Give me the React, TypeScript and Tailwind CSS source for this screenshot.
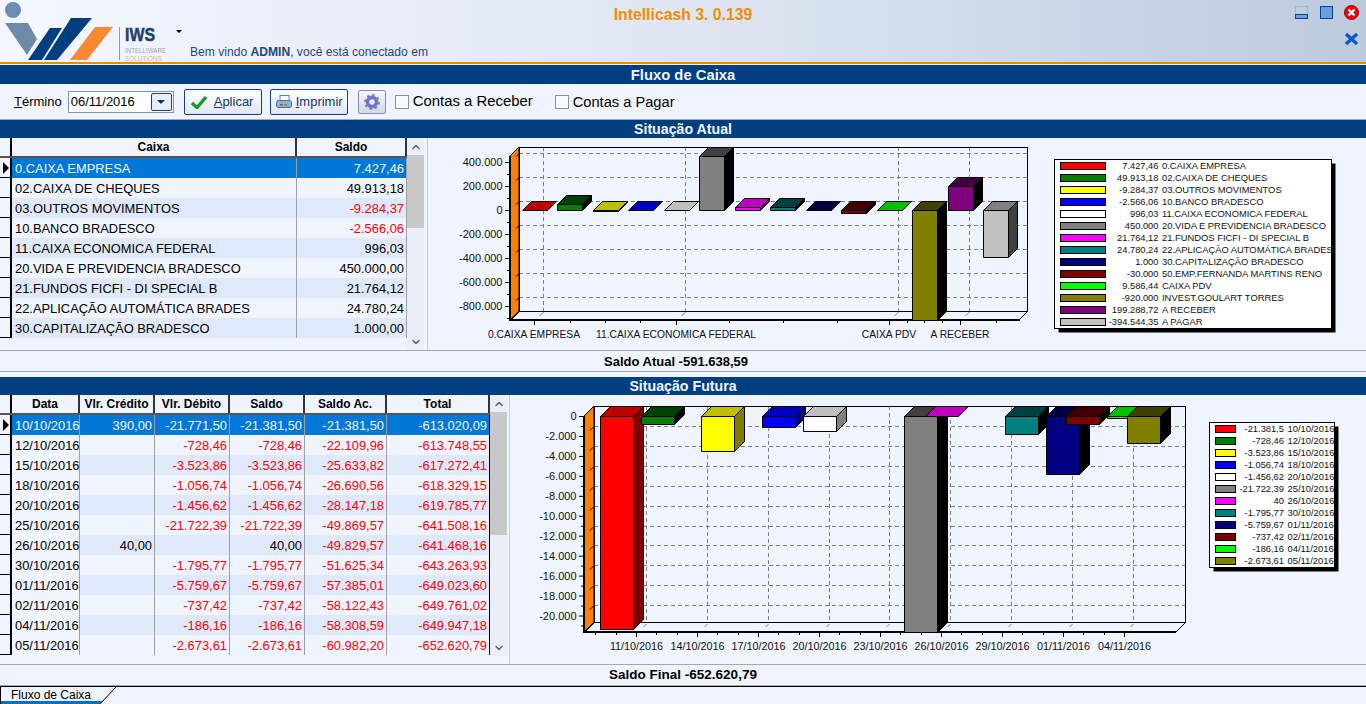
import { ChevronDown, ChevronUp } from "lucide-react";

const shade = (hex: string, amount: number) => {
  const n = parseInt(hex.slice(1), 16);
  const part = (v: number) => Math.max(0, v - amount).toString(16).padStart(2, "0");
  return `#${part((n >> 16) & 255)}${part((n >> 8) & 255)}${part(n & 255)}`;
};

interface BarProps {
  x: number;
  w: number;
  y0: number;
  y1: number;
  d: number;
  c: string;
}

function Bar({ x, w, y0, y1, d, c }: BarProps) {
  return (
    <g stroke="#000" strokeWidth="1" strokeLinejoin="round">
      <polygon
        points={`${x},${y0} ${x + d},${y0 - d} ${x + w + d},${y0 - d} ${x + w},${y0}`}
        fill={shade(c, 64)}
      />
      <polygon
        points={`${x + w},${y0} ${x + w + d},${y0 - d} ${x + w + d},${y1 - d} ${x + w},${y1}`}
        fill={shade(c, 128)}
      />
      <rect x={x} y={y0} width={w} height={y1 - y0} fill={c} />
    </g>
  );
}

interface LegendProps {
  x: number;
  y: number;
  w: number;
  h: number;
  swatchX: number;
  swatchW: number;
  valueEnd: number;
  first: number;
  rows: [string, string, string][];
}

function Legend({ x, y, w, h, swatchX, swatchW, valueEnd, first, rows }: LegendProps) {
  return (
    <g>
      <rect x={x + 4} y={y + 4} width={w} height={h} fill="#000" />
      <rect x={x} y={y} width={w} height={h} fill="#fff" stroke="#000" />
      {rows.map(([color, value, name], i) => (
        <g key={name}>
          <rect x={swatchX} y={first + i * 12} width={swatchW} height={7} fill={color} stroke="#000" />
          <text x={valueEnd} y={first + i * 12 + 6.5} fontSize="9.33" textAnchor="end" fill="#111">
            {value}
          </text>
          <text x={valueEnd + 3.5} y={first + i * 12 + 6.5} fontSize="9.4" fill="#111">
            {name}
          </text>
        </g>
      ))}
    </g>
  );
}

const TOP_YS = [153.5, 177.5, 201.5, 225.5, 249.5, 273.5, 297.5];
const TOP_LABELS = ["400.000", "200.000", "0", "-200.000", "-400.000", "-600.000", "-800.000"];
const TOP_V = [543.5, 685.5, 898.5, 969.5];
const TOP_TICKS = [570, 605, 640, 729, 783, 837, 907, 924, 942, 996];
const TOP_MAJOR = [534, 676, 889, 960];

const TOP_BARS = [
  { x: 522.5, y0: 210.5, y1: 210.5, c: "#ff0000" },
  { x: 557.5, y0: 204.5, y1: 210.5, c: "#008000" },
  { x: 593.5, y0: 210.5, y1: 211.5, c: "#ffff00" },
  { x: 628.5, y0: 210.5, y1: 210.5, c: "#0000ff" },
  { x: 664.5, y0: 210.5, y1: 210.5, c: "#ffffff" },
  { x: 699.5, y0: 156.5, y1: 210.5, c: "#808080" },
  { x: 735.5, y0: 207.5, y1: 210.5, c: "#ff00ff" },
  { x: 770.5, y0: 207.5, y1: 210.5, c: "#008080" },
  { x: 806.5, y0: 210.5, y1: 210.5, c: "#000080" },
  { x: 841.5, y0: 210.5, y1: 213.5, c: "#800000" },
  { x: 877.5, y0: 210.5, y1: 210.5, c: "#00ff00" },
  { x: 912.5, y0: 210.5, y1: 320.5, c: "#808000" },
  { x: 948.5, y0: 186.5, y1: 210.5, c: "#800080" },
  { x: 983.5, y0: 210.5, y1: 257.5, c: "#c0c0c0" },
];

const TOP_LEGEND: [string, string, string][] = [
  ["#ff0000", "7.427,46", "0.CAIXA EMPRESA"],
  ["#008000", "49.913,18", "02.CAIXA DE CHEQUES"],
  ["#ffff00", "-9.284,37", "03.OUTROS MOVIMENTOS"],
  ["#0000ff", "-2.566,06", "10.BANCO BRADESCO"],
  ["#ffffff", "996,03", "11.CAIXA ECONOMICA FEDERAL"],
  ["#808080", "450.000", "20.VIDA E PREVIDENCIA BRADESCO"],
  ["#ff00ff", "21.764,12", "21.FUNDOS FICFI - DI SPECIAL B"],
  ["#008080", "24.780,24", "22.APLICAÇÃO AUTOMÁTICA BRADES"],
  ["#000080", "1.000", "30.CAPITALIZAÇÃO BRADESCO"],
  ["#800000", "-30.000", "50.EMP.FERNANDA MARTINS RENO"],
  ["#00ff00", "9.586,44", "CAIXA PDV"],
  ["#808000", "-920.000", "INVEST.GOULART TORRES"],
  ["#800080", "199.288,72", "A RECEBER"],
  ["#c0c0c0", "-394.544,35", "A PAGAR"],
];

const BOTTOM_YS = [426.5, 446.5, 466.5, 486.5, 506.5, 526.5, 545.5, 565.5, 585.5, 605.5];
const BOTTOM_LABELS = ["0", "-2.000", "-4.000", "-6.000", "-8.000", "-10.000", "-12.000", "-14.000", "-16.000", "-18.000", "-20.000"];
const BOTTOM_V = [646.5, 707.5, 768.5, 829.5, 889.5, 950.5, 1011.5, 1072.5, 1133.5];
const BOTTOM_DATES = ["11/10/2016", "14/10/2016", "17/10/2016", "20/10/2016", "23/10/2016", "26/10/2016", "29/10/2016", "01/11/2016", "04/11/2016"];

const BOTTOM_BARS = [
  { x: 600.5, y1: 629.5, c: "#ff0000" },
  { x: 641.5, y1: 424.5, c: "#008000" },
  { x: 701.5, y1: 451.5, c: "#ffff00" },
  { x: 762.5, y1: 427.5, c: "#0000ff" },
  { x: 803.5, y1: 431.5, c: "#ffffff" },
  { x: 904.5, y1: 632.5, c: "#808080" },
  { x: 925.5, y1: 416.5, c: "#ff00ff" },
  { x: 1005.5, y1: 434.5, c: "#008080" },
  { x: 1046.5, y1: 474.5, c: "#000080" },
  { x: 1066.5, y1: 424.5, c: "#800000" },
  { x: 1107.5, y1: 418.5, c: "#00ff00" },
  { x: 1127.5, y1: 443.5, c: "#808000" },
];

const BOTTOM_LEGEND: [string, string, string][] = [
  ["#ff0000", "-21.381,5", "10/10/2016"],
  ["#008000", "-728,46", "12/10/2016"],
  ["#ffff00", "-3.523,86", "15/10/2016"],
  ["#0000ff", "-1.056,74", "18/10/2016"],
  ["#ffffff", "-1.456,62", "20/10/2016"],
  ["#808080", "-21.722,39", "25/10/2016"],
  ["#ff00ff", "40", "26/10/2016"],
  ["#008080", "-1.795,77", "30/10/2016"],
  ["#000080", "-5.759,67", "01/11/2016"],
  ["#800000", "-737,42", "02/11/2016"],
  ["#00ff00", "-186,16", "04/11/2016"],
  ["#808000", "-2.673,61", "05/11/2016"],
];

function TopChart() {
  return (
    <svg viewBox="428 138 938 212" className="h-[212px] w-[938px] shrink-0 font-['Liberation_Sans',Arial,sans-serif]">
      {TOP_YS.map((y) => (
        <line key={y} x1={519} x2={1028} y1={y} y2={y} stroke="#808080" strokeDasharray="4 3" />
      ))}
      {TOP_V.map((x) => (
        <line key={x} x1={x} x2={x} y1={147} y2={311} stroke="#808080" strokeDasharray="4 3" />
      ))}
      <rect x={519.5} y={147.5} width={508} height={164} fill="none" stroke="#000" />
      <line x1={1027.5} y1={311.5} x2={1019} y2={320} stroke="#000" />
      <line x1={519.5} y1={311.5} x2={511} y2={320} stroke="#000" />
      {TOP_V.map((x) => (
        <line key={x} x1={x} y1={312} x2={x - 4} y2={316} stroke="#808080" />
      ))}
      <polygon points="510,156 519,147 519,311 510,320" fill="#ff8000" stroke="#000" />
      {TOP_YS.map((y) => (
        <line key={y} x1={516} y1={y + 3} x2={519} y2={y} stroke="#000" />
      ))}
      <line x1={510} x2={510} y1={156} y2={321} stroke="#000" strokeWidth="2" />
      <line x1={509} x2={1020} y1={320} y2={320} stroke="#000" strokeWidth="2" />
      {TOP_LABELS.map((label, i) => (
        <g key={label}>
          <line x1={505} x2={510} y1={162.5 + i * 24} y2={162.5 + i * 24} stroke="#000" />
          <line x1={507} x2={510} y1={174.5 + i * 24} y2={174.5 + i * 24} stroke="#000" />
          <text x={502.5} y={166 + i * 24} fontSize="11" textAnchor="end" fill="#111">
            {label}
          </text>
        </g>
      ))}
      {TOP_TICKS.map((x) => (
        <line key={x} x1={x + 0.5} x2={x + 0.5} y1={320} y2={323} stroke="#000" />
      ))}
      {TOP_MAJOR.map((x) => (
        <line key={x} x1={x + 0.5} x2={x + 0.5} y1={320} y2={325} stroke="#000" />
      ))}
      {TOP_BARS.map((b) => (
        <Bar key={b.c} x={b.x} w={25} y0={b.y0} y1={b.y1} d={9} c={b.c} />
      ))}
      <text x={534} y={338} fontSize="10.3" textAnchor="middle" fill="#111">0.CAIXA EMPRESA</text>
      <text x={676} y={338} fontSize="10.3" textAnchor="middle" fill="#111">11.CAIXA ECONOMICA FEDERAL</text>
      <text x={889} y={338} fontSize="10.3" textAnchor="middle" fill="#111">CAIXA PDV</text>
      <text x={960} y={338} fontSize="10.3" textAnchor="middle" fill="#111">A RECEBER</text>
      <Legend x={1054.5} y={159.5} w={277} h={169} swatchX={1060.5} swatchW={45} valueEnd={1158.5} first={162.5} rows={TOP_LEGEND} />
    </svg>
  );
}

function BottomChart() {
  return (
    <svg viewBox="510 395 856 269" className="h-[269px] w-[856px] shrink-0 font-['Liberation_Sans',Arial,sans-serif]">
      {BOTTOM_YS.map((y) => (
        <line key={y} x1={594} x2={1185} y1={y} y2={y} stroke="#808080" strokeDasharray="4 3" />
      ))}
      {BOTTOM_V.map((x) => (
        <line key={x} x1={x} x2={x} y1={406} y2={622} stroke="#808080" strokeDasharray="4 3" />
      ))}
      <rect x={594.5} y={406.5} width={591} height={216} fill="none" stroke="#000" />
      <line x1={1185.5} y1={622.5} x2={1176} y2={632} stroke="#000" />
      <line x1={594.5} y1={622.5} x2={585} y2={632} stroke="#000" />
      {BOTTOM_V.map((x) => (
        <line key={x} x1={x} y1={624} x2={x - 3} y2={627} stroke="#808080" />
      ))}
      <polygon points="584,416 594,406 594,622 584,632" fill="#ff8000" stroke="#000" />
      {BOTTOM_YS.map((y) => (
        <line key={y} x1={590} y1={y + 4} x2={594} y2={y} stroke="#000" />
      ))}
      <line x1={584} x2={584} y1={416} y2={633} stroke="#000" strokeWidth="2" />
      <line x1={583} x2={1176} y1={632} y2={632} stroke="#000" strokeWidth="2" />
      {BOTTOM_LABELS.map((label, i) => (
        <g key={label}>
          <line x1={579} x2={584} y1={416.5 + i * 19.95} y2={416.5 + i * 19.95} stroke="#000" />
          <line x1={581} x2={584} y1={426.5 + i * 19.95} y2={426.5 + i * 19.95} stroke="#000" />
          <text x={576.5} y={420 + i * 19.95} fontSize="11" textAnchor="end" fill="#111">
            {label}
          </text>
        </g>
      ))}
      {BOTTOM_DATES.map((date, i) => {
        const x = 636.5 + i * 61;
        return (
          <g key={date}>
            <line x1={x - 41} x2={x - 41} y1={632} y2={635} stroke="#000" />
            <line x1={x - 20} x2={x - 20} y1={632} y2={635} stroke="#000" />
            <line x1={x} x2={x} y1={632} y2={637} stroke="#000" />
            <text x={x} y={650} fontSize="10.8" textAnchor="middle" fill="#111">
              {date}
            </text>
          </g>
        );
      })}
      {BOTTOM_BARS.map((b) => (
        <Bar key={b.c} x={b.x} w={33} y0={416.5} y1={b.y1} d={10} c={b.c} />
      ))}
      <Legend x={1209.5} y={422.5} w={125} h={145} swatchX={1215.5} swatchW={20} valueEnd={1284} first={425.5} rows={BOTTOM_LEGEND} />
    </svg>
  );
}

function Logo() {
  return (
    <svg viewBox="0 0 190 62" className="h-[62px] w-[190px] shrink-0" fontFamily="'Liberation Sans',Arial,sans-serif">
      <circle cx="13" cy="10" r="8" fill="#6c8db5" />
      <polygon points="5,23 28,23 37,39 27,55" fill="#6f8aa8" />
      <polygon points="28,60 42,60 62,28 50,28" fill="#003f7d" />
      <polygon points="44,60 57,60 92,18 71,18" fill="#003f7d" />
      <polygon points="70,60 87,60 113,27 95,27" fill="#f68a33" />
      <line x1="119.5" x2="119.5" y1="27" y2="60" stroke="#8a9bb0" />
      <text x="125" y="41" fontSize="19" fontWeight="700" fill="#20416b" stroke="#20416b" strokeWidth="0.5" textLength="30" lengthAdjust="spacingAndGlyphs">
        IWS
      </text>
      <text x="125" y="52.5" fontSize="8" fill="#9aa5b5" textLength="41" lengthAdjust="spacingAndGlyphs">
        INTELLIWARE
      </text>
      <text x="125" y="61" fontSize="7.5" fill="#f0b080" textLength="37" lengthAdjust="spacingAndGlyphs">
        SOLUTIONS
      </text>
      <polygon points="176,30 182,30 179,33" fill="#000" />
    </svg>
  );
}

function WindowControls() {
  return (
    <svg viewBox="0 0 80 50" className="h-[50px] w-[80px] shrink-0">
      <rect x="9.5" y="6.5" width="12" height="8" fill="none" stroke="#6a9fd8" strokeDasharray="1 1" />
      <rect x="9.5" y="14.5" width="12" height="4" fill="#6a9fd8" stroke="#0a3fa8" />
      <rect x="34.5" y="6.5" width="12" height="12" fill="#6a9fd8" stroke="#0a3fa8" />
      <circle cx="65.5" cy="12.5" r="7" fill="#f00000" stroke="#a00000" />
      <path d="M62.5 9.5 L68.5 15.5 M68.5 9.5 L62.5 15.5" stroke="#fff" strokeWidth="2.4" />
      <path d="M60 34 L71 44 M71 34 L60 44" stroke="#0a5ac8" strokeWidth="3.4" />
    </svg>
  );
}

function SectionBar({ title }: { title: string }) {
  return (
    <div className="flex h-[18px] shrink-0 items-center justify-center bg-[#003f7f] pt-[1px] text-[14.2px] font-bold text-[#f2f6ff]">
      {title}
    </div>
  );
}

function TotalBar({ label, className }: { label: string; className: string }) {
  return (
    <div className={`flex h-[22px] shrink-0 items-center justify-center border-y border-[#a8a8a8] bg-[#f0f4ff] pt-[1px] font-bold text-black ${className}`}>
      {label}
    </div>
  );
}

interface Column {
  title: string;
  width: string;
  align: string;
}

interface Cell {
  text: string;
  red?: boolean;
}

function Scrollbar({ height, thumb }: { height: string; thumb: string }) {
  return (
    <div className={`flex w-[17px] shrink-0 flex-col bg-[#eaeef8] ${height}`}>
      <div className="flex h-[17px] shrink-0 items-center justify-center">
        <ChevronUp size={12} strokeWidth={3} className="text-[#606060]" />
      </div>
      <div className={`shrink-0 bg-[#c8c8c8] ${thumb}`} />
      <div className="flex-1" />
      <div className="flex h-[17px] shrink-0 items-center justify-center">
        <ChevronDown size={12} strokeWidth={3} className="text-[#606060]" />
      </div>
    </div>
  );
}

interface GridProps {
  columns: Column[];
  rows: Cell[][];
  bandFirst: boolean;
  lastBlack?: boolean;
}

function Grid({ columns, rows, bandFirst, lastBlack }: GridProps) {
  return (
    <div className="flex flex-col">
      <div className="flex h-[20px] border-b-2 border-[#555]">
        <div className="w-[12px] shrink-0 border-r-2 border-black bg-[#f0f4ff]" />
        {columns.map((col) => (
          <div
            key={col.title}
            className={`${col.width} shrink-0 border-r-2 border-[#333] bg-[#f0f4ff] text-center text-[12px] leading-[19px] font-bold text-black`}
          >
            {col.title}
          </div>
        ))}
      </div>
      {rows.map((row, r) => {
        const selected = r === 0;
        const band = r % 2 === 0 && !selected;
        return (
          <div key={row[0].text} className="flex h-[20px]">
            <div className="flex w-[12px] shrink-0 items-center border-r-2 border-b border-black bg-[#f0f4ff] pl-[3px]">
              {selected && <div className="h-0 w-0 border-y-[6px] border-l-[6px] border-y-transparent border-l-black" />}
            </div>
            {columns.map((col, c) => (
              <div
                key={col.title}
                className={`${col.width} ${col.align} shrink-0 overflow-hidden border-r border-[#a0a0a0] px-[2px] text-[12.9px] leading-[21px] whitespace-nowrap ${
                  selected ? "bg-[#0078d7]" : band && (bandFirst || c > 0) ? "bg-[#e0e8fb]" : "bg-[#f0f4ff]"
                } ${selected ? "text-[#f4f8ff]" : row[c].red ? "text-[#ff0000]" : "text-black"} ${
                  lastBlack && c === columns.length - 1 ? "border-r-black" : ""
                }`}
              >
                {row[c].text}
              </div>
            ))}
          </div>
        );
      })}
    </div>
  );
}

const TOP_COLUMNS: Column[] = [
  { title: "Caixa", width: "w-[285px]", align: "pl-[3px] text-left" },
  { title: "Saldo", width: "w-[110px]", align: "text-right" },
];

const TOP_ROWS: Cell[][] = [
  ["0.CAIXA EMPRESA", "7.427,46"],
  ["02.CAIXA DE CHEQUES", "49.913,18"],
  ["03.OUTROS MOVIMENTOS", "-9.284,37"],
  ["10.BANCO BRADESCO", "-2.566,06"],
  ["11.CAIXA ECONOMICA FEDERAL", "996,03"],
  ["20.VIDA E PREVIDENCIA BRADESCO", "450.000,00"],
  ["21.FUNDOS FICFI - DI SPECIAL B", "21.764,12"],
  ["22.APLICAÇÃO AUTOMÁTICA BRADES", "24.780,24"],
  ["30.CAPITALIZAÇÃO BRADESCO", "1.000,00"],
].map(([name, value]) => [{ text: name }, { text: value, red: value.startsWith("-") }]);

const BOTTOM_COLUMNS: Column[] = [
  { title: "Data", width: "w-[68px]", align: "pl-[3px] text-left" },
  { title: "Vlr. Crédito", width: "w-[75px]", align: "text-right" },
  { title: "Vlr. Débito", width: "w-[75px]", align: "text-right" },
  { title: "Saldo", width: "w-[75px]", align: "text-right" },
  { title: "Saldo Ac.", width: "w-[82px]", align: "text-right" },
  { title: "Total", width: "w-[103px]", align: "text-right" },
];

const BOTTOM_ROWS: Cell[][] = [
  ["10/10/2016", "390,00", "-21.771,50", "-21.381,50", "-21.381,50", "-613.020,09"],
  ["12/10/2016", "", "-728,46", "-728,46", "-22.109,96", "-613.748,55"],
  ["15/10/2016", "", "-3.523,86", "-3.523,86", "-25.633,82", "-617.272,41"],
  ["18/10/2016", "", "-1.056,74", "-1.056,74", "-26.690,56", "-618.329,15"],
  ["20/10/2016", "", "-1.456,62", "-1.456,62", "-28.147,18", "-619.785,77"],
  ["25/10/2016", "", "-21.722,39", "-21.722,39", "-49.869,57", "-641.508,16"],
  ["26/10/2016", "40,00", "", "40,00", "-49.829,57", "-641.468,16"],
  ["30/10/2016", "", "-1.795,77", "-1.795,77", "-51.625,34", "-643.263,93"],
  ["01/11/2016", "", "-5.759,67", "-5.759,67", "-57.385,01", "-649.023,60"],
  ["02/11/2016", "", "-737,42", "-737,42", "-58.122,43", "-649.761,02"],
  ["04/11/2016", "", "-186,16", "-186,16", "-58.308,59", "-649.947,18"],
  ["05/11/2016", "", "-2.673,61", "-2.673,61", "-60.982,20", "-652.620,79"],
].map((row) => row.map((text) => ({ text, red: text.startsWith("-") })));

function Toolbar() {
  return (
    <div className="flex h-[36px] shrink-0 items-center border-b border-[#a8a8a8] bg-[#f0f4ff] pl-[14px] text-black">
      <span className="text-[13px]">
        <span className="underline">T</span>érmino
      </span>
      <div className="ml-[6px] flex h-[22px] w-[106px] items-center justify-between border border-[#8093b5] bg-white pl-[2px] pr-[1px] text-[13px]">
        06/11/2016
        <div className="flex h-[18px] w-[21px] items-center justify-center rounded-[2px] border border-[#1a3e8a] bg-[#e8eefb]">
          <div className="h-0 w-0 border-x-[4px] border-t-[4px] border-x-transparent border-t-[#10305f]" />
        </div>
      </div>
      <button className="ml-[10px] flex h-[26px] w-[78px] items-center rounded-[2px] border border-[#1a3e8a] bg-gradient-to-b from-white to-[#dfe6f8] pl-[6px] text-[13px] text-[#1a3a5a]">
        <svg viewBox="0 0 16 14" className="h-[14px] w-[16px]">
          <path d="M1 8 L6 12.5 L15 2" fill="none" stroke="#1a9a2a" strokeWidth="3.4" />
        </svg>
        <span className="ml-[7px]">
          <span className="underline">A</span>plicar
        </span>
      </button>
      <button className="ml-[8px] flex h-[26px] w-[78px] items-center rounded-[2px] border border-[#1a3e8a] bg-gradient-to-b from-white to-[#dfe6f8] pl-[5px] text-[13px] text-[#1a3a5a]">
        <svg viewBox="0 0 16 14" className="h-[14px] w-[16px]">
          <rect x="4" y="0.5" width="9" height="5" fill="#fff" stroke="#5a7fb0" />
          <rect x="0.5" y="5.5" width="15" height="7" rx="2" fill="#8fb0d8" stroke="#4a6fa0" />
          <rect x="4" y="9" width="3" height="1.5" fill="#e03030" />
          <rect x="8" y="9" width="3" height="1.5" fill="#30b040" />
        </svg>
        <span className="ml-[4px]">
          <span className="underline">I</span>mprimir
        </span>
      </button>
      <button className="ml-[10px] flex h-[24px] w-[28px] items-center justify-center rounded-[2px] border border-[#8a8fa8] bg-gradient-to-b from-[#f4f6fc] to-[#d4d9ea]">
        <svg viewBox="0 0 16 16" className="h-[16px] w-[16px]">
          <circle cx="8" cy="8" r="4.6" fill="none" stroke="#6f76cc" strokeWidth="3.6" />
          <circle cx="8" cy="8" r="7" fill="none" stroke="#6f76cc" strokeWidth="1.8" strokeDasharray="2.4 3.1" />
        </svg>
      </button>
      <div className="ml-[9px] h-[14px] w-[14px] border border-[#8a8fa0] bg-[#f8faff]" />
      <span className="ml-[4px] w-[142px] text-[14.9px]">Contas a Receber</span>
      <div className="h-[14px] w-[14px] border border-[#8a8fa0] bg-[#f8faff]" />
      <span className="ml-[4px] text-[14.67px]">Contas a Pagar</span>
    </div>
  );
}

export default function App() {
  return (
    <div className="flex h-[704px] w-[1366px] flex-col overflow-hidden bg-[#f0f4ff] font-['Liberation_Sans',Arial,sans-serif]">
      <header className="flex h-[62px] shrink-0 bg-gradient-to-r from-[#f4f7ff] via-[#dfe6f3] to-[#bccbdc]">
        <div className="flex flex-1">
          <Logo />
          <span className="mt-[45px] text-[12.1px] leading-[15px] whitespace-nowrap text-[#1f4a78]">
            Bem vindo <b>ADMIN</b>, você está conectado em
          </span>
        </div>
        <span className="mt-[6px] text-[15.8px] leading-[18px] font-bold whitespace-nowrap text-[#f28c00]">Intellicash 3. 0.139</span>
        <div className="flex flex-1 justify-end">
          <WindowControls />
        </div>
      </header>
      <div className="h-[2px] shrink-0 bg-[#e98a00]" />
      <div className="h-[1px] shrink-0" />
      <div className="flex h-[19px] shrink-0 items-center justify-center bg-[#003f7f] pt-[1px] text-[14.8px] font-bold text-[#f2f6ff]">
        Fluxo de Caixa
      </div>
      <Toolbar />
      <SectionBar title="Situação Atual" />
      <div className="flex h-[212px] shrink-0">
        <Grid columns={TOP_COLUMNS} rows={TOP_ROWS} bandFirst />
        <Scrollbar height="h-[212px]" thumb="h-[73px]" />
        <div className="w-[4px] shrink-0 border-r border-[#c8ccd8]" />
        <TopChart />
      </div>
      <TotalBar label="Saldo Atual -591.638,59" className="pr-[14px] text-[13px]" />
      <div className="h-[5px] shrink-0" />
      <SectionBar title="Situação Futura" />
      <div className="flex h-[269px] shrink-0">
        <div className="flex h-[260px] flex-col border-b border-[#a0a0a0]">
          <Grid columns={BOTTOM_COLUMNS} rows={BOTTOM_ROWS} bandFirst={false} lastBlack />
        </div>
        <Scrollbar height="h-[261px]" thumb="h-[123px]" />
        <div className="w-[3px] shrink-0 border-r border-[#c8ccd8]" />
        <BottomChart />
      </div>
      <TotalBar label="Saldo Final -652.620,79" className="text-[13.5px]" />
      <div className="flex h-[18px] shrink-0 border-t border-black bg-[#f0f4ff]">
        <div className="relative h-[17px] w-[116px]">
          <svg viewBox="0 0 116 17" className="absolute inset-0 h-[17px] w-[116px]">
            <polygon points="1,0 116,0 100,17 1,17" fill="#f0f4ff" />
            <polygon points="1,14 103,14 100,17 1,17" fill="#0070d0" />
            <path d="M0.5 0 V17 M116 0 L100 17" stroke="#000" fill="none" />
          </svg>
          <span className="absolute top-[1px] left-[11px] text-[12px] leading-[14px] text-black">Fluxo de Caixa</span>
        </div>
      </div>
    </div>
  );
}
